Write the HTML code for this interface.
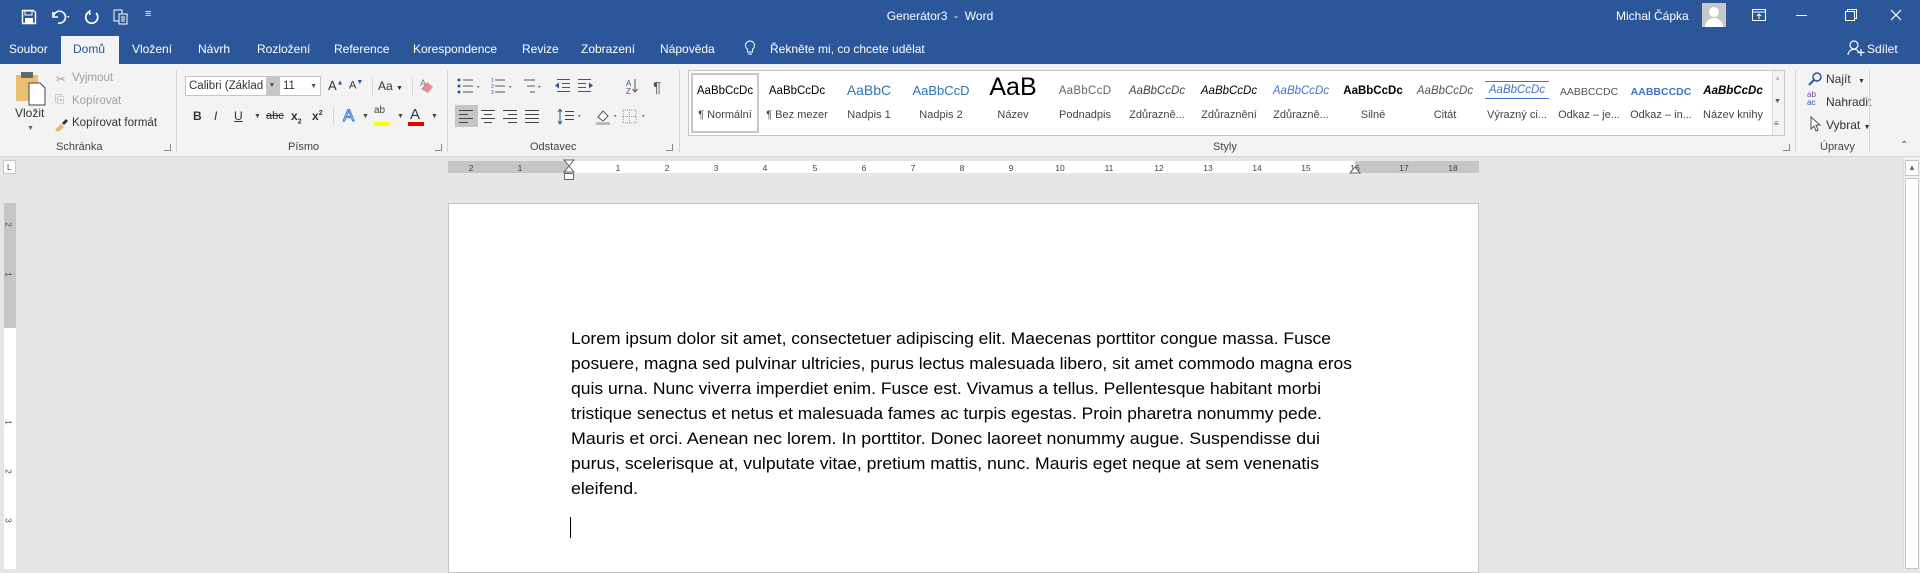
<!DOCTYPE html>
<html><head><meta charset="utf-8">
<style>
*{margin:0;padding:0;box-sizing:border-box}
body{width:1920px;height:569px;overflow:hidden;background:#e6e6e6;font-family:"Liberation Sans",sans-serif;position:relative;color:#444}
.a{position:absolute;white-space:nowrap}
#top{position:absolute;left:0;top:0;width:1920px;height:64px;background:#2b579a}
.w{color:#fff}
.tab{position:absolute;top:42px;font-size:12px;color:#fff}
#rib{position:absolute;left:0;top:64px;width:1920px;height:93px;background:#f3f3f3;border-bottom:1px solid #d5d5d5}
.sep{position:absolute;top:6px;width:1px;height:82px;background:#d5d5d5}
.gl{position:absolute;top:77px;font-size:11px;color:#444}
.t12{font-size:11.5px;color:#333}
.ic{position:absolute}
.lnch{position:absolute;top:80px;width:7px;height:7px;border-right:1px solid #888;border-bottom:1px solid #888}
.sty{position:absolute;top:0;width:72px;height:65px;text-align:center}
.sty .s{position:absolute;left:0;right:0;top:14px;font-size:11.5px;color:#000;overflow:hidden;white-space:nowrap;padding:0 3px}
.sty .l{position:absolute;left:0;right:0;top:38px;font-size:11px;color:#444;white-space:nowrap;overflow:hidden}
.rn{position:absolute;top:163px;font-size:8.5px;color:#444;transform:translateX(-50%)}
</style></head><body>
<div id="top"></div>
<svg class="ic" style="left:21px;top:9px" width="16" height="16" viewBox="0 0 16 16"><path d="M1.5 1.5h11l2 2v11h-13z" fill="none" stroke="#fff" stroke-width="1.4"/><rect x="4" y="2" width="7" height="4" fill="none" stroke="#fff"/><rect x="4" y="9" width="8" height="5.5" fill="#fff"/></svg>
<svg class="ic" style="left:50px;top:9px" width="22" height="16" viewBox="0 0 22 16"><path d="M3 3v5h5M3.5 7.5A6 6 0 1 1 8 14" fill="none" stroke="#fff" stroke-width="1.6"/><path d="M17 7l2.5 0-1.25 2z" fill="#fff"/></svg>
<svg class="ic" style="left:84px;top:9px" width="16" height="16" viewBox="0 0 16 16"><path d="M6 2.5A6 6 0 1 0 12 4" fill="none" stroke="#fff" stroke-width="1.7"/><path d="M5 1v5h1.5V1z" fill="#fff"/></svg>
<svg class="ic" style="left:113px;top:8px" width="16" height="18" viewBox="0 0 16 18"><rect x="1" y="2" width="8" height="11" fill="none" stroke="#fff"/><rect x="6" y="6" width="8" height="10" fill="#2b579a" stroke="#fff"/><path d="M8 9h4M8 11h4M8 13h4" stroke="#fff"/></svg>
<div class="a w" style="left:145px;top:8px;font-size:11px">&#8801;</div>
<div class="a w" style="left:0;width:1880px;text-align:center;top:9px;font-size:12px">Generátor3 &nbsp;-&nbsp; Word</div>
<div class="a w" style="left:1616px;top:9px;font-size:12px">Michal Čápka</div>
<div class="a" style="left:1702px;top:3px;width:24px;height:24px;background:#c8c8c8;overflow:hidden"><div class="a" style="left:7px;top:4px;width:10px;height:10px;border-radius:50%;background:#fff"></div><div class="a" style="left:3px;top:15px;width:18px;height:12px;border-radius:9px 9px 0 0;background:#fff"></div></div>
<svg class="ic" style="left:1752px;top:9px" width="14" height="12"><rect x="0.5" y="0.5" width="13" height="11" fill="none" stroke="#fff"/><path d="M0 3h14M7 10V5M5 7l2-2 2 2" stroke="#fff" fill="none"/></svg>
<div class="a" style="left:1796px;top:15px;width:11px;height:1px;background:#fff"></div>
<svg class="ic" style="left:1845px;top:9px" width="12" height="12"><rect x="0.5" y="2.5" width="9" height="9" fill="none" stroke="#fff"/><path d="M2.5 2.5V0.5h9v9H9.5" fill="none" stroke="#fff"/></svg>
<svg class="ic" style="left:1890px;top:9px" width="12" height="12"><path d="M1 1l10 10M11 1L1 11" stroke="#fff" stroke-width="1.2"/></svg>
<div class="tab" style="left:9px">Soubor</div>
<div class="a" style="left:61px;top:36px;width:58px;height:29px;background:#f3f3f3"></div>
<div class="tab" style="left:73px;color:#2b579a">Domů</div>
<div class="tab" style="left:132px">Vložení</div>
<div class="tab" style="left:198px">Návrh</div>
<div class="tab" style="left:257px">Rozložení</div>
<div class="tab" style="left:334px">Reference</div>
<div class="tab" style="left:413px">Korespondence</div>
<div class="tab" style="left:522px">Revize</div>
<div class="tab" style="left:581px">Zobrazení</div>
<div class="tab" style="left:660px">Nápověda</div>
<svg class="ic" style="left:744px;top:40px" width="12" height="16"><path d="M6 1a4.5 4.5 0 0 0-2.5 8.2V12h5V9.2A4.5 4.5 0 0 0 6 1zM4 14h4" fill="none" stroke="#fff"/></svg>
<div class="tab" style="left:770px">Řekněte mi, co chcete udělat</div>
<svg class="ic" style="left:1847px;top:39px" width="18" height="18"><circle cx="7" cy="6" r="4" fill="none" stroke="#fff" stroke-width="1.2"/><path d="M1 16a6 6 0 0 1 11-3M14 10v7M10.5 13.5h7" fill="none" stroke="#fff" stroke-width="1.2"/></svg>
<div class="tab" style="left:1867px">Sdílet</div>

<div id="rib">
 <svg class="ic" style="left:14px;top:6px" width="34" height="36" viewBox="0 0 34 36"><rect x="2" y="5" width="22" height="26" fill="#e8c070"/><rect x="7" y="2" width="12" height="6" fill="#666"/><path d="M15 13h11l5 5v17H15z" fill="#fff" stroke="#444"/></svg>
 <div class="a t12" style="left:15px;top:42px;font-size:12px">Vložit</div>
 <div class="a" style="left:27px;top:61px;font-size:7px;color:#666">▼</div>
 <div class="a t12" style="left:56px;top:8px;color:#999">✂</div><div class="a t12" style="left:72px;top:8px;color:#a0a0a0">Vyjmout</div>
 <div class="a t12" style="left:55px;top:30px;color:#a0a0a0">⎘</div><div class="a t12" style="left:72px;top:31px;color:#a0a0a0">Kopírovat</div>
 <svg class="ic" style="left:53px;top:54px" width="16" height="14"><path d="M2 12l6-6 3 3-6 5z" fill="#e8b860"/><path d="M9 5l4-4 2 2-4 4z" fill="#333"/></svg>
 <div class="a t12" style="left:72px;top:53px">Kopírovat formát</div>
 <div class="gl" style="left:56px">Schránka</div>
 <div class="lnch" style="left:164px"></div>
 <div class="sep" style="left:176px"></div>
 <div class="a" style="left:185px;top:12px;width:94px;height:20px;background:#fff;border:1px solid #c6c6c6;font-size:11.5px;color:#333;padding:3px 0 0 3px">Calibri (Základ</div>
 <div class="a" style="left:266px;top:13px;width:12px;height:18px;background:#c6c6c6;font-size:7px;text-align:center;padding-top:5px;color:#555">▼</div>
 <div class="a" style="left:279px;top:12px;width:42px;height:20px;background:#fff;border:1px solid #c6c6c6;font-size:11.5px;color:#333;padding:3px 0 0 3px">11<span style="position:absolute;right:3px;top:6px;font-size:7px;color:#555">▼</span></div>
 <div class="a t12" style="left:328px;top:14px;font-size:13px">A<sup style="font-size:7px;color:#2b579a">▲</sup></div>
 <div class="a t12" style="left:349px;top:15px;font-size:11px">A<sup style="font-size:7px;color:#2b579a">▼</sup></div>
 <div class="a" style="left:372px;top:13px;width:1px;height:18px;background:#d5d5d5"></div>
 <div class="a t12" style="left:378px;top:15px;font-size:12px">Aa <span style="font-size:7px">▼</span></div>
 <div class="a" style="left:412px;top:13px;width:1px;height:18px;background:#d5d5d5"></div>
 <svg class="ic" style="left:418px;top:13px" width="18" height="18"><path d="M3 12l6-7 6 5-5 6z" fill="#e58a9b"/><text x="2" y="9" font-size="9" fill="#777" font-family="Liberation Sans">A</text></svg>
 <div class="a" style="left:193px;top:45px;font-size:12px;font-weight:bold;color:#333">B</div>
 <div class="a" style="left:214px;top:45px;font-size:12px;font-style:italic;color:#333">I</div>
 <div class="a" style="left:234px;top:45px;font-size:12px;text-decoration:underline;color:#333">U</div><div class="a" style="left:254px;top:49px;font-size:7px">▼</div>
 <div class="a" style="left:266px;top:46px;font-size:11px;text-decoration:line-through;color:#333">abc</div>
 <div class="a" style="left:291px;top:45px;font-size:12px;font-weight:bold;color:#333">x<sub style="font-size:7px">2</sub></div>
 <div class="a" style="left:312px;top:45px;font-size:12px;font-weight:bold;color:#333">x<sup style="font-size:7px">2</sup></div>
 <div class="a" style="left:333px;top:43px;width:1px;height:18px;background:#d5d5d5"></div>
 <div class="a" style="left:343px;top:42px;font-size:17px;color:#fff;-webkit-text-stroke:1px #3a7bd5">A</div><div class="a" style="left:362px;top:49px;font-size:7px">▼</div>
 <div class="a" style="left:374px;top:41px;font-size:10px;color:#444">ab</div><div class="a" style="left:374px;top:58px;width:16px;height:4px;background:#ffff00"></div><div class="a" style="left:397px;top:49px;font-size:7px">▼</div>
 <div class="a" style="left:410px;top:42px;font-size:15px;color:#333">A</div><div class="a" style="left:408px;top:58px;width:16px;height:4px;background:#e00"></div><div class="a" style="left:431px;top:49px;font-size:7px">▼</div>
 <div class="gl" style="left:288px">Písmo</div>
 <div class="lnch" style="left:435px"></div>
 <div class="sep" style="left:447px"></div>
 <svg class="ic" style="left:456px;top:13px" width="240" height="18">
  <g fill="#555"><circle cx="3" cy="3" r="1.5" fill="#2b579a"/><circle cx="3" cy="9" r="1.5" fill="#2b579a"/><circle cx="3" cy="15" r="1.5" fill="#2b579a"/><rect x="7" y="2.5" width="10" height="1"/><rect x="7" y="8.5" width="10" height="1"/><rect x="7" y="14.5" width="10" height="1"/></g>
  <path d="M21 9l2.5 0-1.25 2z" fill="#555"/>
  <g fill="#555"><text x="35" y="5" font-size="5" fill="#2b579a">1</text><text x="35" y="11" font-size="5" fill="#2b579a">2</text><text x="35" y="17" font-size="5" fill="#2b579a">3</text><rect x="39" y="2.5" width="10" height="1"/><rect x="39" y="8.5" width="10" height="1"/><rect x="39" y="14.5" width="10" height="1"/></g>
  <path d="M53 9l2.5 0-1.25 2z" fill="#555"/>
  <g fill="#555"><rect x="68" y="2.5" width="11" height="1"/><rect x="71" y="8.5" width="8" height="1"/><rect x="74" y="14.5" width="5" height="1"/></g>
  <path d="M82 9l2.5 0-1.25 2z" fill="#555"/>
  <g fill="#555"><rect x="101" y="2" width="13" height="1"/><rect x="106" y="6" width="8" height="1"/><rect x="106" y="10" width="8" height="1"/><rect x="101" y="14" width="13" height="1"/><path d="M99 8.5l4-3v6z" fill="#2b579a"/></g>
  <g fill="#555"><rect x="122" y="2" width="13" height="1"/><rect x="122" y="6" width="8" height="1"/><rect x="122" y="10" width="8" height="1"/><rect x="122" y="14" width="13" height="1"/><path d="M137 8.5l-4-3v6z" fill="#2b579a"/></g>
  <text x="170" y="9" font-size="8" fill="#2b579a" font-family="Liberation Sans">A</text><text x="170" y="17" font-size="8" fill="#7b3fa0" font-family="Liberation Sans">Z</text><path d="M179 2v13M176.5 12l2.5 3 2.5-3" fill="none" stroke="#555"/>
  <text x="197" y="15" font-size="15" fill="#555" font-family="Liberation Sans">¶</text>
 </svg>
 <div class="a" style="left:455px;top:41px;width:23px;height:22px;background:#c5c5c5"></div>
 <svg class="ic" style="left:459px;top:45px" width="260" height="16">
  <g fill="#444"><rect x="0" y="1" width="14" height="1"/><rect x="0" y="5" width="9" height="1"/><rect x="0" y="9" width="14" height="1"/><rect x="0" y="13" width="9" height="1"/></g>
  <g fill="#444"><rect x="22" y="1" width="14" height="1"/><rect x="25" y="5" width="8" height="1"/><rect x="22" y="9" width="14" height="1"/><rect x="25" y="13" width="8" height="1"/></g>
  <g fill="#444"><rect x="44" y="1" width="14" height="1"/><rect x="49" y="5" width="9" height="1"/><rect x="44" y="9" width="14" height="1"/><rect x="49" y="13" width="9" height="1"/></g>
  <g fill="#444"><rect x="66" y="1" width="14" height="1"/><rect x="66" y="5" width="14" height="1"/><rect x="66" y="9" width="14" height="1"/><rect x="66" y="13" width="14" height="1"/></g>
  <path d="M101 0v15M99 3l2-3 2 3M99 12l2 3 2-3" fill="none" stroke="#2b579a"/><g fill="#444"><rect x="106" y="2" width="9" height="1"/><rect x="106" y="6" width="9" height="1"/><rect x="106" y="10" width="9" height="1"/></g><path d="M119 6l2.5 0-1.25 2z" fill="#555"/>
  <path d="M139 8l5-6 5 5-5 5z" fill="#fff" stroke="#555"/><rect x="137" y="13" width="14" height="3" fill="#bbb"/><path d="M155 6l2.5 0-1.25 2z" fill="#555"/>
  <rect x="164" y="1" width="13" height="13" fill="none" stroke="#999" stroke-dasharray="1 1"/><path d="M170.5 1v13M164 7.5h13" stroke="#999" stroke-dasharray="1 1"/><path d="M183 6l2.5 0-1.25 2z" fill="#555"/>
 </svg>
 <div class="gl" style="left:530px">Odstavec</div>
 <div class="lnch" style="left:666px"></div>
 <div class="sep" style="left:679px"></div>
 <div class="a" style="left:688px;top:6px;width:1097px;height:66px;background:#fff;border:1px solid #c6c6c6">
  <div class="a" style="left:2px;top:2px;width:68px;height:60px;border:2px solid #c6c6c6"></div>
  <div class="sty" style="left:0"><div class="s">AaBbCcDc</div><div class="l">¶ Normální</div></div>
  <div class="sty" style="left:72px"><div class="s">AaBbCcDc</div><div class="l">¶ Bez mezer</div></div>
  <div class="sty" style="left:144px"><div class="s" style="font-size:14px;top:11px;color:#2e74b5">AaBbC</div><div class="l">Nadpis 1</div></div>
  <div class="sty" style="left:216px"><div class="s" style="font-size:13px;top:12px;color:#2e74b5">AaBbCcD</div><div class="l">Nadpis 2</div></div>
  <div class="sty" style="left:288px"><div class="s" style="font-size:25px;top:2px;color:#000;overflow:visible">AaB</div><div class="l">Název</div></div>
  <div class="sty" style="left:360px"><div class="s" style="color:#666;letter-spacing:.3px">AaBbCcD</div><div class="l">Podnadpis</div></div>
  <div class="sty" style="left:432px"><div class="s" style="font-style:italic;color:#444">AaBbCcDc</div><div class="l">Zdůrazně...</div></div>
  <div class="sty" style="left:504px"><div class="s" style="font-style:italic">AaBbCcDc</div><div class="l">Zdůraznění</div></div>
  <div class="sty" style="left:576px"><div class="s" style="font-style:italic;color:#4472c4">AaBbCcDc</div><div class="l">Zdůrazně...</div></div>
  <div class="sty" style="left:648px"><div class="s" style="font-weight:bold">AaBbCcDc</div><div class="l">Silné</div></div>
  <div class="sty" style="left:720px"><div class="s" style="font-style:italic;color:#555">AaBbCcDc</div><div class="l">Citát</div></div>
  <div class="sty" style="left:792px"><div class="s" style="font-style:italic;color:#4472c4;border-top:1px solid #4472c4;border-bottom:1px solid #4472c4;margin:0 4px;top:10px;padding:2px 0">AaBbCcDc</div><div class="l">Výrazný ci...</div></div>
  <div class="sty" style="left:864px"><div class="s" style="color:#555;font-size:10.5px;top:15px">AABBCCDC</div><div class="l">Odkaz – je...</div></div>
  <div class="sty" style="left:936px"><div class="s" style="color:#4472c4;font-weight:bold;font-size:10.5px;top:15px">AABBCCDC</div><div class="l">Odkaz – in...</div></div>
  <div class="sty" style="left:1008px"><div class="s" style="font-weight:bold;font-style:italic">AaBbCcDc</div><div class="l">Název knihy</div></div>
  <div class="a" style="left:1083px;top:0;width:12px;height:64px;background:#f3f3f3;border-left:1px solid #ddd"></div>
  <div class="a" style="left:1085px;top:4px;font-size:7px;color:#bbb">▲</div>
  <div class="a" style="left:1085px;top:27px;font-size:7px;color:#555">▼</div>
  <div class="a" style="left:1085px;top:48px;font-size:8px;color:#555">≡</div>
 </div>
 <div class="gl" style="left:1213px">Styly</div>
 <div class="lnch" style="left:1783px"></div>
 <div class="sep" style="left:1795px"></div>
 <svg class="ic" style="left:1808px;top:8px" width="14" height="14"><circle cx="9" cy="5" r="4" fill="none" stroke="#2b579a" stroke-width="1.5"/><path d="M6 8l-5 5" stroke="#2b579a" stroke-width="2"/></svg>
 <div class="a t12" style="left:1826px;top:8px;font-size:12px">Najít <span style="font-size:7px;margin-left:4px">▼</span></div>
 <div class="a" style="left:1807px;top:27px;font-size:8px;line-height:8px;color:#7b3fa0">ab<br><span style="color:#2b579a">ac</span></div>
 <div class="a t12" style="left:1826px;top:31px;font-size:12px">Nahradit</div>
 <svg class="ic" style="left:1810px;top:52px" width="12" height="16"><path d="M1 1v12l3-3 2 5 2-1-2-5h4z" fill="#fff" stroke="#555"/></svg>
 <div class="a t12" style="left:1826px;top:54px;font-size:12px">Vybrat <span style="font-size:7px">▼</span></div>
 <div class="gl" style="left:1820px">Úpravy</div>
 <div class="sep" style="left:1869px"></div>
 <div class="a" style="left:1900px;top:76px;font-size:10px;color:#555">⌃</div>
</div>

<div class="a" style="left:3px;top:160px;width:13px;height:14px;background:#fff;border:1px solid #c6c6c6;font-size:8px;padding:2px 0 0 3px;color:#444">L</div>
<div class="a" style="left:448px;top:161px;width:1031px;height:12px;background:#c6c6c6"></div>
<div class="a" style="left:569px;top:161px;width:786px;height:12px;background:#fff"></div>
<div class="rn" style="left:471px">2</div><div class="rn" style="left:520px">1</div>
<div class="rn" style="left:618px">1</div><div class="rn" style="left:667px">2</div><div class="rn" style="left:716px">3</div><div class="rn" style="left:765px">4</div><div class="rn" style="left:815px">5</div><div class="rn" style="left:864px">6</div><div class="rn" style="left:913px">7</div><div class="rn" style="left:962px">8</div><div class="rn" style="left:1011px">9</div><div class="rn" style="left:1060px">10</div><div class="rn" style="left:1109px">11</div><div class="rn" style="left:1159px">12</div><div class="rn" style="left:1208px">13</div><div class="rn" style="left:1257px">14</div><div class="rn" style="left:1306px">15</div><div class="rn" style="left:1355px">16</div><div class="rn" style="left:1404px">17</div><div class="rn" style="left:1453px">18</div>
<svg class="ic" style="left:563px;top:159px" width="12" height="22"><path d="M1 1h10L6 7zM6 7l-5 6h10z" fill="#fff" stroke="#666"/><rect x="1.5" y="14.5" width="9" height="6" fill="#fff" stroke="#666"/></svg>
<svg class="ic" style="left:1349px;top:166px" width="12" height="8"><path d="M1 7l5-6 5 6z" fill="#fff" stroke="#666"/></svg>

<div class="a" style="left:4px;top:203px;width:12px;height:125px;background:#c6c6c6"></div>
<div class="a" style="left:4px;top:328px;width:12px;height:241px;background:#fff"></div>
<div class="a" style="left:6px;top:220px;font-size:8px;transform:rotate(90deg)">2</div>
<div class="a" style="left:6px;top:270px;font-size:8px;transform:rotate(90deg)">1</div>
<div class="a" style="left:6px;top:418px;font-size:8px;transform:rotate(90deg)">1</div>
<div class="a" style="left:6px;top:467px;font-size:8px;transform:rotate(90deg)">2</div>
<div class="a" style="left:6px;top:516px;font-size:8px;transform:rotate(90deg)">3</div>

<div class="a" style="left:1903px;top:157px;width:17px;height:412px;background:#f0f0f0;border-left:1px solid #ddd"></div>
<div class="a" style="left:1905px;top:160px;width:14px;height:16px;background:#fff;border:1px solid #c6c6c6;font-size:8px;text-align:center;color:#666;padding-top:2px">▲</div>
<div class="a" style="left:1905px;top:178px;width:14px;height:391px;background:#fff;border:1px solid #c6c6c6"></div>

<div class="a" style="left:448px;top:203px;width:1031px;height:370px;background:#fff;border:1px solid #c6c6c6"></div>
<svg class="ic" style="left:0;top:0" width="1920" height="569" font-family="Liberation Sans" font-size="17" fill="#000">
<text x="571" y="344" textLength="760" lengthAdjust="spacingAndGlyphs">Lorem ipsum dolor sit amet, consectetuer adipiscing elit. Maecenas porttitor congue massa. Fusce</text>
<text x="571" y="369" textLength="781" lengthAdjust="spacingAndGlyphs">posuere, magna sed pulvinar ultricies, purus lectus malesuada libero, sit amet commodo magna eros</text>
<text x="571" y="394" textLength="750" lengthAdjust="spacingAndGlyphs">quis urna. Nunc viverra imperdiet enim. Fusce est. Vivamus a tellus. Pellentesque habitant morbi</text>
<text x="571" y="419" textLength="751" lengthAdjust="spacingAndGlyphs">tristique senectus et netus et malesuada fames ac turpis egestas. Proin pharetra nonummy pede.</text>
<text x="571" y="444" textLength="749" lengthAdjust="spacingAndGlyphs">Mauris et orci. Aenean nec lorem. In porttitor. Donec laoreet nonummy augue. Suspendisse dui</text>
<text x="571" y="469" textLength="748" lengthAdjust="spacingAndGlyphs">purus, scelerisque at, vulputate vitae, pretium mattis, nunc. Mauris eget neque at sem venenatis</text>
<text x="571" y="494" textLength="67" lengthAdjust="spacingAndGlyphs">eleifend.</text>
<rect x="570" y="517" width="1" height="21" fill="#000"/>
</svg>
</body></html>
